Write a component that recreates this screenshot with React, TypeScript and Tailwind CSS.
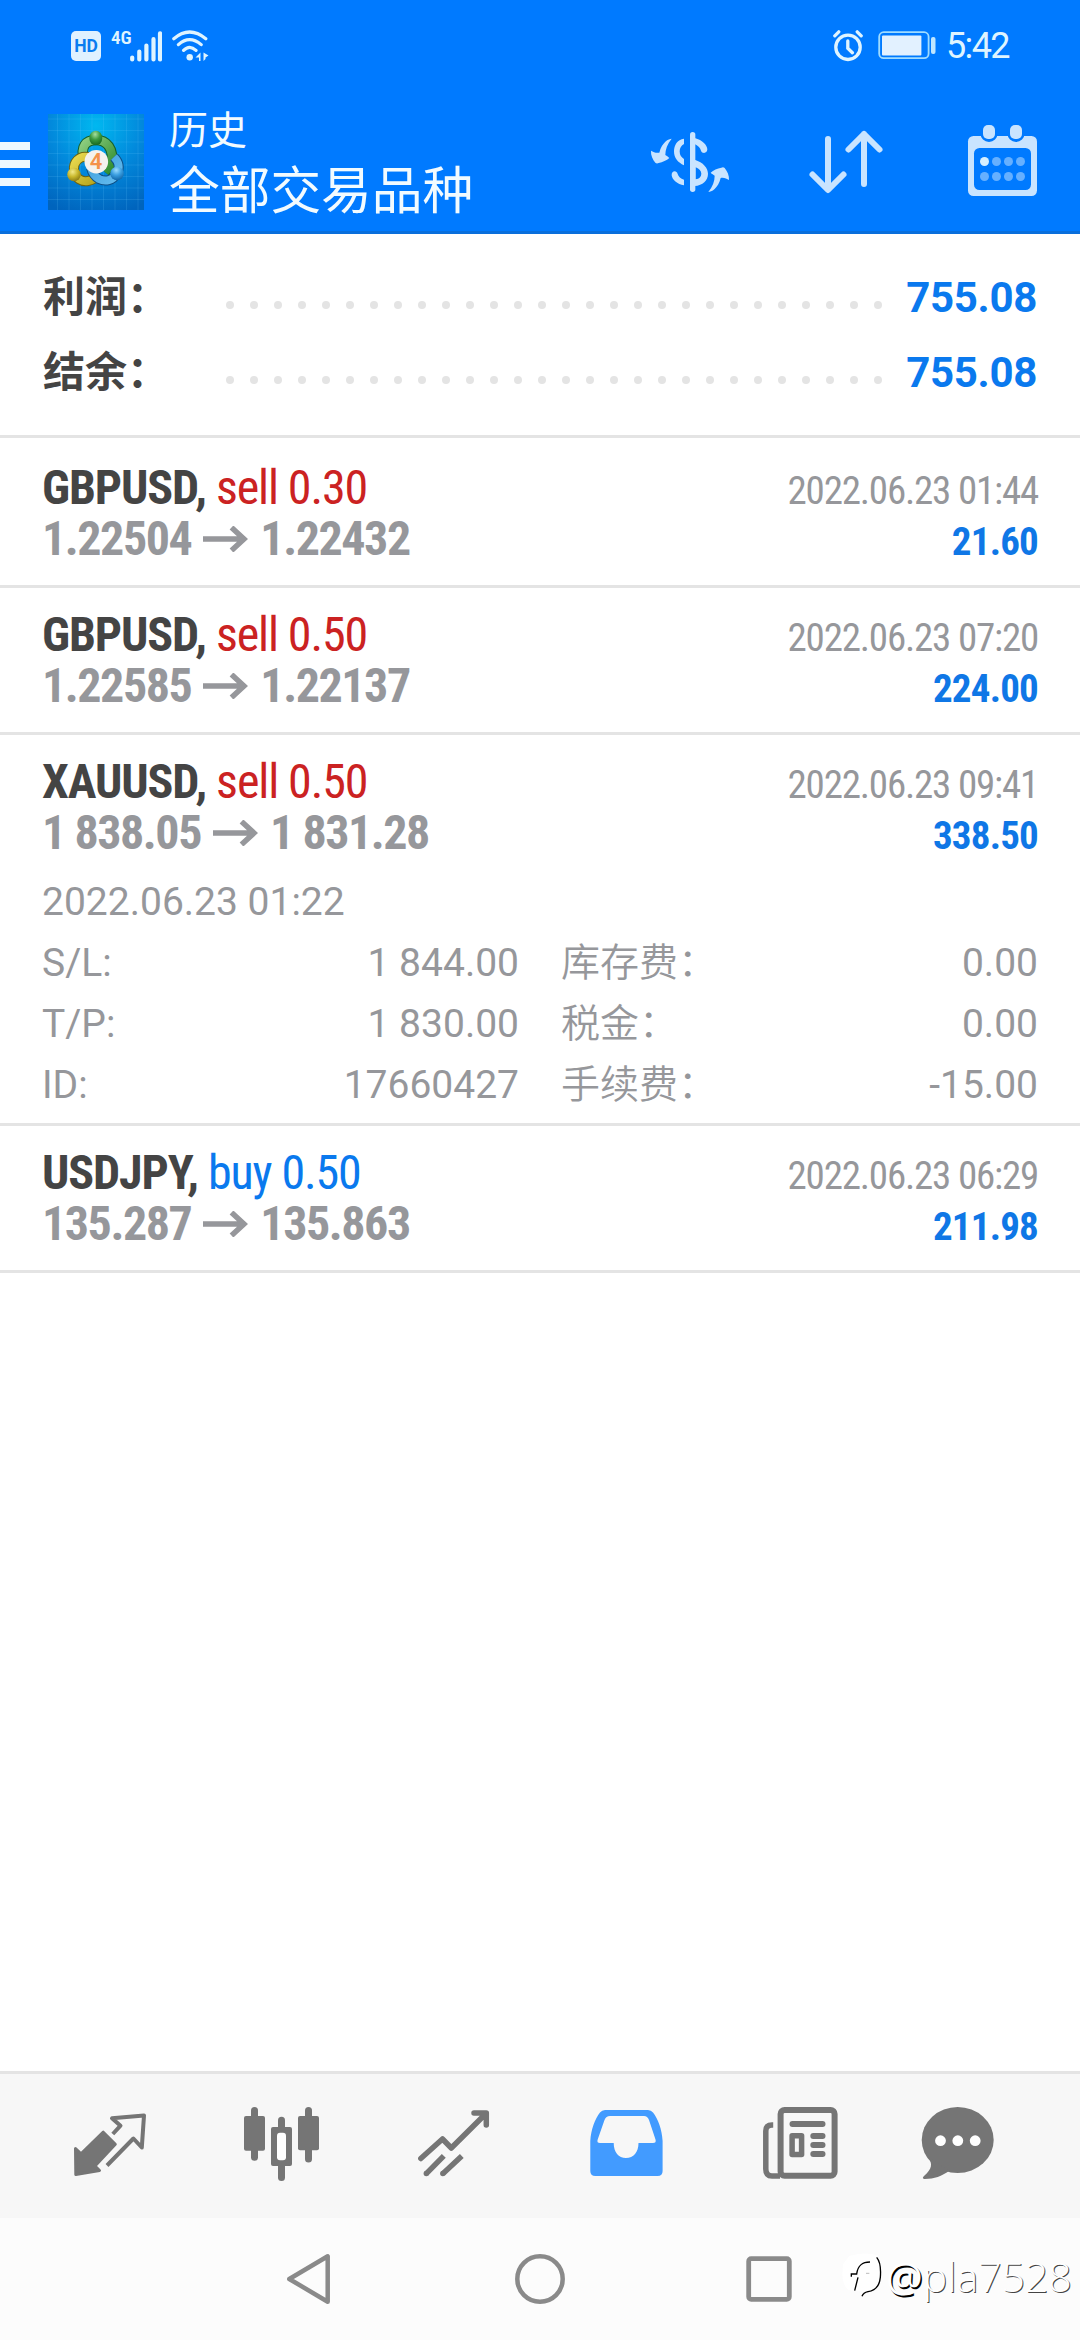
import React from 'react'

const deals = [
  { symbol: "GBPUSD", side: "sell", volume: "0.30", open: "1.22504", close: "1.22432", time: "2022.06.23 01:44", profit: "21.60" },
  { symbol: "GBPUSD", side: "sell", volume: "0.50", open: "1.22585", close: "1.22137", time: "2022.06.23 07:20", profit: "224.00" },
  {
    symbol: "XAUUSD", side: "sell", volume: "0.50", open: "1 838.05", close: "1 831.28", time: "2022.06.23 09:41", profit: "338.50",
    openTime: "2022.06.23 01:22",
    details: [
      ["S/L:", "1 844.00", "库存费：", "0.00"],
      ["T/P:", "1 830.00", "税金：", "0.00"],
      ["ID:", "17660427", "手续费：", "-15.00"],
    ],
  },
  { symbol: "USDJPY", side: "buy", volume: "0.50", open: "135.287", close: "135.863", time: "2022.06.23 06:29", profit: "211.98" },
]

const StatusBar = () => (
  <div className="h-[92px] flex items-center justify-between pl-[71px] pr-[71px] text-[#dff4ff]">
    <div className="flex items-center h-[31px]">
      <div className="size-[30px] rounded-[5px] bg-[#e0f1ff] text-[#0a7cf0] text-[17.5px] leading-[30px] font-bold text-center">HD</div>
      <span className="ml-[10px] w-[19px] self-start text-[19px] leading-[14px] font-semibold font-stretch-condensed">4G</span>
      <svg width="32" height="31" viewBox="0 0 32 31" stroke="currentColor" strokeWidth="4.2" strokeLinecap="round">
        <path d="M2.2 26.5v2M9.3 20.5v8M16.4 14.5v14M23.5 8.2v20.3M30 2.4v26.1" />
      </svg>
      <svg className="ml-[10px]" width="37" height="32" viewBox="0 0 37 32" fill="none" stroke="currentColor" strokeWidth="3.2" strokeLinecap="round">
        <path d="M1.8 8.8Q17.5 -4.8 33.8 8.8M6.4 14.6Q17.5 4.6 29.2 14.6M11.6 20.4Q17.5 14.2 24 20.4" />
        <circle cx="17.7" cy="27.2" r="3.2" fill="currentColor" stroke="none" />
        <path d="M23.500 27.500l5-5v8.500h-1.500v-3.500zM31.500 22.500v8.500l2-2v-1.500l3-2z" fill="currentColor" stroke="none" />
      </svg>
    </div>
    <div className="flex items-center">
      <svg width="30" height="32" viewBox="0 0 30 32" fill="none" stroke="currentColor" strokeWidth="3.3" strokeLinecap="round">
        <circle cx="15" cy="17.3" r="12.2" />
        <path d="M14.8 11v7.3l4.6 4.4M1.800 5.800l4-4M24.2 1.800l4 4" />
      </svg>
      <svg className="ml-[15px]" width="58" height="30" viewBox="0 0 58 30">
        <rect x="1.2" y="1.2" width="49.4" height="26" rx="4.5" fill="none" stroke="#9fdcff" strokeWidth="1.8" />
        <rect x="4" y="4.4" width="39.4" height="20" rx="1" fill="#e2f1ff" />
        <rect x="53" y="6" width="4.5" height="17" rx="2" fill="#bfe6ff" />
      </svg>
      <span className="ml-[10px] text-[36px] leading-[40px] tracking-[-1.6px]">5:42</span>
    </div>
  </div>
)

const Logo = () => (
  <svg width="96" height="96" viewBox="0 0 96 96">
    <defs>
      <radialGradient id="bg" cx="50%" cy="12%" r="95%">
        <stop offset="0" stopColor="#00b8f0" />
        <stop offset="0.5" stopColor="#0289dc" />
        <stop offset="1" stopColor="#0064bd" />
      </radialGradient>
      <linearGradient id="green" x1="0" y1="0" x2="1" y2="1">
        <stop offset="0" stopColor="#8fcf80" />
        <stop offset="1" stopColor="#2f8c2f" />
      </linearGradient>
      <linearGradient id="yellow" x1="0" y1="0" x2="1" y2="1">
        <stop offset="0" stopColor="#e9d94e" />
        <stop offset="1" stopColor="#b5a41c" />
      </linearGradient>
      <linearGradient id="blue" x1="0" y1="0" x2="1" y2="1">
        <stop offset="0" stopColor="#3b9ddb" />
        <stop offset="1" stopColor="#63bbee" />
      </linearGradient>
      <radialGradient id="gball" cx="45%" cy="25%" r="75%">
        <stop offset="0" stopColor="#a5dfa0" />
        <stop offset="0.5" stopColor="#3b9a40" />
        <stop offset="1" stopColor="#17671f" />
      </radialGradient>
      <radialGradient id="yball" cx="40%" cy="30%" r="75%">
        <stop offset="0" stopColor="#f3ea8a" />
        <stop offset="0.5" stopColor="#c9b82c" />
        <stop offset="1" stopColor="#857614" />
      </radialGradient>
      <radialGradient id="bball" cx="45%" cy="25%" r="75%">
        <stop offset="0" stopColor="#9bdcff" />
        <stop offset="0.5" stopColor="#3a9ee0" />
        <stop offset="1" stopColor="#1266a8" />
      </radialGradient>
    </defs>
    <rect width="96" height="96" fill="url(#bg)" />
    <path d="M9.5 0v96M21 0v96M32.500 0v96M44 0v96M55.500 0v96M67 0v96M78.500 0v96M90 0v96M0 5h96M0 16.500h96M0 28h96M0 39.500h96M0 51h96M0 62.500h96M0 74h96M0 85.500h96" stroke="#6fd0ff" strokeOpacity="0.16" strokeWidth="1" />
    <g fill="none">
      <path d="M36 47C32 32 38 26 48 26s19 8 15 25l-6 7" stroke="#155f2a" strokeWidth="10.500" />
      <path d="M36 47C32 32 38 26 48 26s19 8 15 25l-6 7" stroke="url(#green)" strokeWidth="8.500" />
      <path d="M40 43c-9-2-15 6-14 13 1 9 8 12 14 11s8-3 10-6" stroke="#6c6412" strokeWidth="10" />
      <path d="M40 43c-9-2-15 6-14 13 1 9 8 12 14 11s8-3 10-6" stroke="url(#yellow)" strokeWidth="8" />
      <path d="M66 43c5 5 6 11 3 16-4 8-12 9-18 6-5-3-7-7-8-11" stroke="#0e4f86" strokeWidth="10" />
      <path d="M66 43c5 5 6 11 3 16-4 8-12 9-18 6-5-3-7-7-8-11" stroke="url(#blue)" strokeWidth="8" />
    </g>
    <ellipse cx="47.800" cy="24" rx="6.500" ry="7.300" fill="url(#gball)" />
    <circle cx="26" cy="60.500" r="6.800" fill="url(#yball)" />
    <circle cx="69" cy="59.500" r="6.800" fill="url(#bball)" />
    <circle cx="48.300" cy="47.700" r="11.800" fill="#f4f2ee" />
    <text x="48" y="55.300" textAnchor="middle" fontSize="22" fontWeight="600" fill="#f4924a" fontFamily="Roboto">4</text>
  </svg>
)

const Header = () => (
  <header className="h-[142px] flex items-center border-b-[3px] border-[#0a6fdc] text-[#f2fbff]">
    <div className="w-[30px] mt-[5px] flex flex-col gap-[10px]">
      <span className="h-[8px] bg-[#eef8ff]" />
      <span className="h-[8px] bg-[#eef8ff]" />
      <span className="h-[8px] bg-[#eef8ff]" />
    </div>
    <div className="ml-[18px]">
      <Logo />
    </div>
    <div className="ml-[25px] pt-[5px] flex-1">
      <p className="text-[39px] leading-[54px]">历史</p>
      <p className="text-[50.7px] leading-[67px]">全部交易品种</p>
    </div>
    <svg width="100" height="80" viewBox="0 0 300 240" fill="#c9e4ff">
      <path d="M158 38V202" stroke="#c9e4ff" strokeWidth="16" strokeLinecap="round" />
      <path d="M132 50C112 52 102 70 102 88c0 20 12 34 30 42V111C124 106 119 100 119 88c0-10 5-18 13-22z" />
      <path d="M164 48c24 6 38 22 38 34 0 13-16 14-19 4-2-8-8-14-19-20z" />
      <path fillRule="evenodd" d="M164 113c26 8 40 25 40 42 0 21-16 35-40 37zM167 136v36c11-2 17-8 17-17 0-8-6-14-17-19z" />
      <path d="M132 190C112 188 96 172 95 160c-1-14 15-16 18-4 2 8 9 14 19 17z" />
      <path d="M95 50C86 50 66 60 58 92 48 94 40 90 33 86 32 100 38 112 46 122q4 4 10 1C68 120 80 116 88 108 84 104 80 102 76 99 76 82 82 66 95 50z" />
      <path transform="rotate(180 150 130)" d="M95 50C86 50 66 60 58 92 48 94 40 90 33 86 32 100 38 112 46 122q4 4 10 1C68 120 80 116 88 108 84 104 80 102 76 99 76 82 82 66 95 50z" />
    </svg>
    <svg className="ml-[65px]" width="82" height="76" viewBox="805 124 82 76" fill="none" stroke="#c9e4ff" strokeWidth="6" strokeLinecap="round" strokeLinejoin="round">
      <path d="M828 139v50M812.500 174.500L828 190l15.500-15.500M864 184v-50M848.500 149.500L864 134l15.500 15.500" />
    </svg>
    <svg className="ml-[76px] mr-[38px]" width="79" height="76" viewBox="963 124 79 76">
      <rect x="968" y="136" width="69" height="60" rx="5.500" fill="#c9e4ff" />
      <rect x="974" y="148" width="57" height="42" rx="5.500" fill="#007aff" />
      <path d="M989 131v2.500M1016 131v2.500" stroke="#007aff" strokeWidth="17" strokeLinecap="round" />
      <rect x="983" y="125" width="12" height="14" rx="5" fill="#c9e4ff" />
      <rect x="1010" y="125" width="12" height="14" rx="5" fill="#c9e4ff" />
      <circle cx="984.500" cy="161.500" r="4.500" fill="#d6efff" />
      <g fill="#66b0ff">
        <circle cx="996.500" cy="161.500" r="4.500" />
        <circle cx="1008.500" cy="161.500" r="4.500" />
        <circle cx="1020.500" cy="161.500" r="4.500" />
        <circle cx="984.500" cy="176.500" r="4.500" />
        <circle cx="996.500" cy="176.500" r="4.500" />
        <circle cx="1008.500" cy="176.500" r="4.500" />
        <circle cx="1020.500" cy="176.500" r="4.500" />
      </g>
    </svg>
  </header>
)

const SummaryRow = ({ label, value }: { label: string; value: string }) => (
  <div className="h-[75px] flex items-center justify-between text-[42px] font-bold">
    <span className="w-[183px] text-[#444444] leading-[75px] whitespace-nowrap">{label}</span>
    <div className="w-[656px] mt-[15px] flex justify-between">
      {Array.from({ length: 28 }, (_, i) => (
        <span key={i} className="size-2 rounded-full bg-[#e4e4e4]" />
      ))}
    </div>
    <span className="flex-1 text-right text-[#0a79ee] leading-[75px] tracking-[-0.3px]">{value}</span>
  </div>
)

const DealRow = ({ deal }: { deal: any }) => (
  <div className="border-b-[3px] border-[#e4e4e4] px-[42px]">
    <div className="h-[144px] flex justify-between font-stretch-condensed">
      <div className="pt-[21px] text-[48px] leading-[51px] tracking-[-1.1px]">
        <p>
          <span className="font-bold text-[#444444]">{deal.symbol}, </span>
          <span className={deal.side === "buy" ? "text-[#0a79ee]" : "text-[#cb2222]"}>
            {deal.side} {deal.volume}
          </span>
        </p>
        <p className="flex items-center font-bold tracking-[-1.45px] text-[#96979b]">
          {deal.open}
          <svg className="mx-[12px]" width="45" height="26" viewBox="0 0 45 26" fill="none" stroke="currentColor" strokeWidth="5.500">
            <path d="M0 13h41M28.500 1.500L41 13 28.500 24.500" />
          </svg>
          {deal.close}
        </p>
      </div>
      <div className="pt-[25px] text-[39px] leading-[51px] text-right">
        <p className="tracking-[-1.2px] text-[#96979b]">{deal.time}</p>
        <p className="font-bold tracking-[-0.8px] text-[#0f77e6]">{deal.profit}</p>
      </div>
    </div>
    {deal.details && (
      <div className="-mt-[7px] pb-[7px] text-[39px] leading-[61px] text-[#96979b]">
        <p>{deal.openTime}</p>
        {deal.details.map((row: string[]) => (
          <div key={row[0]} className="flex h-[61px]">
            <div className="w-[477px] flex justify-between">
              <span>{row[0]}</span>
              <span>{row[1]}</span>
            </div>
            <div className="ml-[42px] flex-1 flex justify-between">
              <span className="[font-weight:350]">{row[2]}</span>
              <span>{row[3]}</span>
            </div>
          </div>
        ))}
      </div>
    )}
  </div>
)

const TabBar = () => (
  <nav className="h-[147px] border-t-[3px] border-[#e4e4e4] bg-[#f7f7f7] flex pt-[31px] pl-[70px] text-[#757575]">
    <svg width="80" height="80" viewBox="0 0 80 80" fill="none" stroke="currentColor" strokeWidth="4" strokeLinejoin="round">
      <path d="M5.500 43.500L11 48.800 33.300 27.200 45.300 39.300 25 61 29.500 65.500 5.800 69.500z" fill="currentColor" strokeWidth="3" />
      <path d="M42.800 29l7.700-8.300L42 13.200 74 10.500 71.800 42.500 63.400 33.500 37 60.500" />
    </svg>
    <svg className="ml-[90px]" width="84" height="80" viewBox="0 0 84 80" fill="currentColor" stroke="none">
      <rect x="4" y="11" width="21" height="34.700" rx="2" />
      <rect x="11" y="2" width="7" height="53.700" rx="3.500" />
      <rect x="58" y="11" width="21" height="34.300" rx="2" />
      <rect x="65" y="2" width="7" height="55.500" rx="3.500" />
      <rect x="38" y="11.700" width="7" height="64.300" rx="3.500" />
      <rect x="31" y="22" width="21" height="39" rx="2" />
      <rect x="37" y="27.700" width="9" height="27.500" rx="3" fill="#fff" />
    </svg>
    <svg className="ml-[91px]" width="80" height="80" viewBox="0 0 80 80" fill="none" stroke="currentColor" strokeWidth="5.500" strokeLinejoin="round">
      <path strokeLinecap="round" d="M5.800 53.500L27.500 34 36.300 43 70.500 9M59 8h12.300v12" />
      <path d="M11.300 68.700L28.800 50.800M27.800 68.700L46.800 51" />
      <circle cx="11.300" cy="68.500" r="2.700" fill="currentColor" stroke="none" />
      <circle cx="27.800" cy="68.500" r="2.700" fill="currentColor" stroke="none" />
    </svg>
    <svg className="ml-[91px]" width="80" height="80" viewBox="0 0 80 80" fill="#429bff">
      <path fillRule="evenodd" d="M4.300 66V36C5 24 9 14 14 7.500Q16 5 19 5H62Q65 5 67 7.500C72 14 76 24 76.600 36V66Q76.600 71 71.600 71H9.300Q4.300 71 4.300 66zM24 11Q20 11 18.500 15L11.700 34.500Q10.500 38 14 38H27.700C27.700 47 32.500 53 40 53S52.500 47 52.500 38H67Q70.500 38 69.500 34.500L63 15Q61.500 11 58 11z" />
    </svg>
    <svg className="ml-[92px]" width="84" height="80" viewBox="0 0 84 80" fill="none" stroke="currentColor" strokeWidth="6">
      <rect x="22.600" y="5" width="54" height="65.700" rx="4" />
      <path strokeWidth="5.500" d="M15.200 20H14Q7.800 20 7.800 26V64Q7.800 71 14 71H22" />
      <path strokeLinecap="round" d="M34.500 19H64.500M55.300 31H64.500M55.300 39.900H64.500M55.300 49H64.500" />
      <rect x="34.100" y="30.700" width="9.500" height="18.800" strokeWidth="5.500" strokeLinejoin="round" />
    </svg>
    <svg className="ml-[76px]" width="80" height="80" viewBox="0 0 80 80" fill="currentColor">
      <ellipse cx="39.700" cy="35" rx="36" ry="33" />
      <path d="M10 52c5 7 4 12-4 19-2 2-1 3 1 3 9 0 17-3 24-8z" />
      <g fill="#fff">
        <circle cx="22.500" cy="35.700" r="5.400" />
        <circle cx="39.800" cy="35.700" r="5.400" />
        <circle cx="57.200" cy="35.700" r="5.400" />
      </g>
    </svg>
  </nav>
)

const SystemNav = () => (
  <div className="relative h-[122px] bg-[#fcfcfc] flex items-center text-[#8a8a8a]">
    <svg className="ml-[284px]" width="50" height="54" viewBox="0 0 50 54" fill="none" stroke="currentColor" strokeWidth="4.500" strokeLinejoin="round">
      <path d="M5.300 27L43.700 4.300V49.700z" />
    </svg>
    <svg className="ml-[179px]" width="54" height="54" viewBox="0 0 54 54" fill="none" stroke="currentColor" strokeWidth="4.500">
      <circle cx="27" cy="27" r="22.700" />
    </svg>
    <svg className="ml-[175px]" width="54" height="54" viewBox="0 0 54 54" fill="none" stroke="currentColor" strokeWidth="4.800">
      <rect x="6.700" y="6.700" width="40.600" height="40.600" rx="2.500" />
    </svg>
    <div className="absolute left-[842px] top-[34px] flex items-center">
      <svg width="44" height="48" viewBox="36 54 132 144" fill="none" stroke="#000" strokeWidth="4">
        <path d="M58 66Q100 52 144 64q10 40 2 80-8 26-34 30l-56-6Q30 150 40 90z" fill="#fff" stroke="none" />
        <path d="M74 170L84 130M64 128V120H80C84 92 98 84 120 84M140 70c10 12 13 36 11 60-3 28-15 40-37 43q-14 3-18 14" />
        <path d="M108 118h10" stroke="#999" strokeWidth="2" />
      </svg>
      <span className="font-['Open_Sans','Noto_Sans',sans-serif] font-light text-[41px] leading-[48px] text-white [text-shadow:1px_1px_0_#444]">
        <span className="font-normal [text-shadow:1.5px_1.5px_0_#000]">@</span>pla7528
      </span>
    </div>
  </div>
)

const App = () => {
  return (
    <div className="w-[1080px] h-[2340px] flex flex-col bg-white overflow-hidden font-['Roboto','Noto_Sans_CJK_SC',sans-serif]">
      <div className="bg-[#007aff]">
        <StatusBar />
        <Header />
      </div>
      <section className="h-[204px] pt-[26px] px-[43px] border-b-[3px] border-[#e4e4e4]">
        <SummaryRow label="利润：" value="755.08" />
        <SummaryRow label="结余：" value="755.08" />
      </section>
      <main className="flex-1 pt-[3px]">
        {deals.map((deal, i) => (
          <DealRow key={i} deal={deal} />
        ))}
      </main>
      <TabBar />
      <SystemNav />
    </div>
  )
}

export default App
